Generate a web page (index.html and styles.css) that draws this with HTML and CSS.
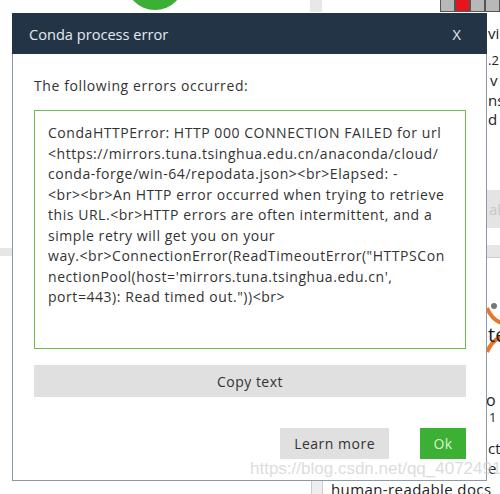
FILE: index.html
```html
<!DOCTYPE html>
<html lang="en">
<head>
    <meta charset="UTF-8">
    <title>Conda process error</title>
    <link rel="stylesheet" href="styles.css">
</head>
<body>
    <div class="desktop">
        <!-- app content behind the modal -->
        <div class="bg-circle"></div>
        <div class="bg-scroll"></div>
        <div class="bg-squares"><span></span><span class="red"></span><span></span><span></span></div>
        <div class="bg-strip left"></div>
        <div class="bg-strip right"></div>
        <div class="bg-button">all</div>
        <div class="bg-text t1">vi</div>
        <div class="bg-text t2">.2</div>
        <div class="bg-text t3">v</div>
        <div class="bg-text t4">ns</div>
        <div class="bg-text t5">d</div>
        <svg class="bg-logo" width="20" height="60" viewBox="0 0 20 60">
            <circle cx="9" cy="6" r="3" fill="#777"/>
            <path d="M2 8 Q8 22 20 24" stroke="#e8772e" stroke-width="4" fill="none"/>
            <path d="M2 52 Q8 38 20 36" stroke="#e8772e" stroke-width="4" fill="none"/>
        </svg>
        <div class="bg-text t6">te</div>
        <div class="bg-text t7">o</div>
        <div class="bg-text t8">1</div>
        <div class="bg-text t9">ct</div>
        <div class="bg-text t10">e</div>
        <div class="bg-check"></div>
        <div class="bg-text docs">human-readable docs wh</div>

        <div class="dialog">
            <div class="dialog-title">
                <span>Conda process error</span>
                <span class="close">X</span>
            </div>
            <div class="dialog-body">
                <p class="lead">The following errors occurred:</p>
                <div class="error-box">CondaHTTPError: HTTP 000 CONNECTION FAILED for url<br>&lt;https://mirrors.tuna.tsinghua.edu.cn/anaconda/cloud/<br>conda-forge/win-64/repodata.json&gt;&lt;br&gt;Elapsed: -<br>&lt;br&gt;&lt;br&gt;An HTTP error occurred when trying to retrieve<br>this URL.&lt;br&gt;HTTP errors are often intermittent, and a<br>simple retry will get you on your<br>way.&lt;br&gt;ConnectionError(ReadTimeoutError("HTTPSCon<br>nectionPool(host='mirrors.tuna.tsinghua.edu.cn',<br>port=443): Read timed out."))&lt;br&gt;</div>
                <button class="btn copy">Copy text</button>
                <div class="actions">
                    <button class="btn">Learn more</button>
                    <button class="btn ok">Ok</button>
                </div>
            </div>
        </div>
        <div class="watermark">https://blog.csdn.net/qq_40724917</div>
    </div>
</body>
</html>
```
FILE: styles.css
```css
body { margin: 0; background: #fff; font-family: "Open Sans", "DejaVu Sans", sans-serif; color: #333; }
.desktop { position: relative; width: 500px; height: 494px; overflow: hidden; }

.bg-circle { position: absolute; left: 125px; top: -52px; width: 60px; height: 62px; border-radius: 50%; background: #3cb034; }
.bg-scroll { position: absolute; left: 310px; top: 0; width: 12px; height: 12px; background: #e8e8e8; }
.bg-squares { position: absolute; left: 440px; top: -2px; display: flex; }
.bg-squares span { width: 13px; height: 12px; background: #b8b8b8; border: 1px solid #555; }
.bg-squares .red { background: #e8141c; }
.bg-strip { position: absolute; top: 248px; height: 8px; background: #e6e6e6; }
.bg-strip.left { left: 0; width: 13px; }
.bg-strip.right { left: 487px; width: 13px; top: 245px; height: 12px; border-bottom: 1px solid #ccc; }
.bg-button { position: absolute; left: 487px; top: 190px; width: 20px; height: 38px; background: #e4e4e4; color: #c8c8c8; font-size: 15px; line-height: 38px; padding-left: 2px; }
.bg-text { position: absolute; left: 488px; font-size: 15px; color: #222; line-height: 18px; }
.t1 { top: 24px; }
.t2 { top: 51px; font-size: 13px; }
.t3 { top: 71px; left: 490px; }
.t4 { top: 91px; }
.t5 { top: 110px; }
.bg-logo { position: absolute; left: 485px; top: 300px; }
.t6 { top: 323px; font-size: 20px; line-height: 24px; }
.t7 { top: 391px; left: 486px; font-size: 16px; }
.t8 { top: 408px; left: 489px; font-size: 13px; }
.t9 { top: 439px; }
.t10 { top: 459px; }
.bg-check { position: absolute; left: 311px; top: 478px; width: 10px; height: 20px; background: #eee; border: 1px solid #ccc; }
.docs { left: 331px; top: 480px; font-size: 15px; letter-spacing: 0.4px; }

.dialog { position: absolute; left: 12px; top: 13px; width: 475px; height: 468px; box-sizing: border-box; background: #fff; border: 1px solid #8a99a6; border-top: none; }
.dialog-title { height: 41px; background: #243447; color: #e6eaee; display: flex; justify-content: space-between; align-items: center; padding: 0 26px 0 17px; margin: 0 -1px; font-size: 14.6px; }
.dialog-body { padding: 22px 20px 0 21px; }
.lead { margin: 0 0 14px; font-size: 14px; line-height: 20px; letter-spacing: 0.6px; color: #333; }
.error-box { height: 239px; box-sizing: border-box; border: 1px solid #6cc04a; padding: 12px 10px 0 13px; font-size: 14px; letter-spacing: 0.55px; line-height: 20.5px; color: #333; white-space: nowrap; overflow: hidden; }
.btn { font-family: inherit; font-size: 14px; letter-spacing: 0.5px; color: #333; background: #e0e0e0; border: none; height: 31px; padding: 0 14px; }
.copy { display: block; width: 100%; height: 32px; margin-top: 16px; }
.actions { display: flex; justify-content: flex-end; gap: 31px; margin-top: 31px; }
.btn.ok { background: #3cb034; color: #d8f5d0; width: 46px; padding: 0; }

.watermark { position: absolute; left: 250px; top: 459px; font-size: 17px; color: rgba(205, 205, 205, 0.7); font-family: "Liberation Sans", sans-serif; white-space: nowrap; }
```
